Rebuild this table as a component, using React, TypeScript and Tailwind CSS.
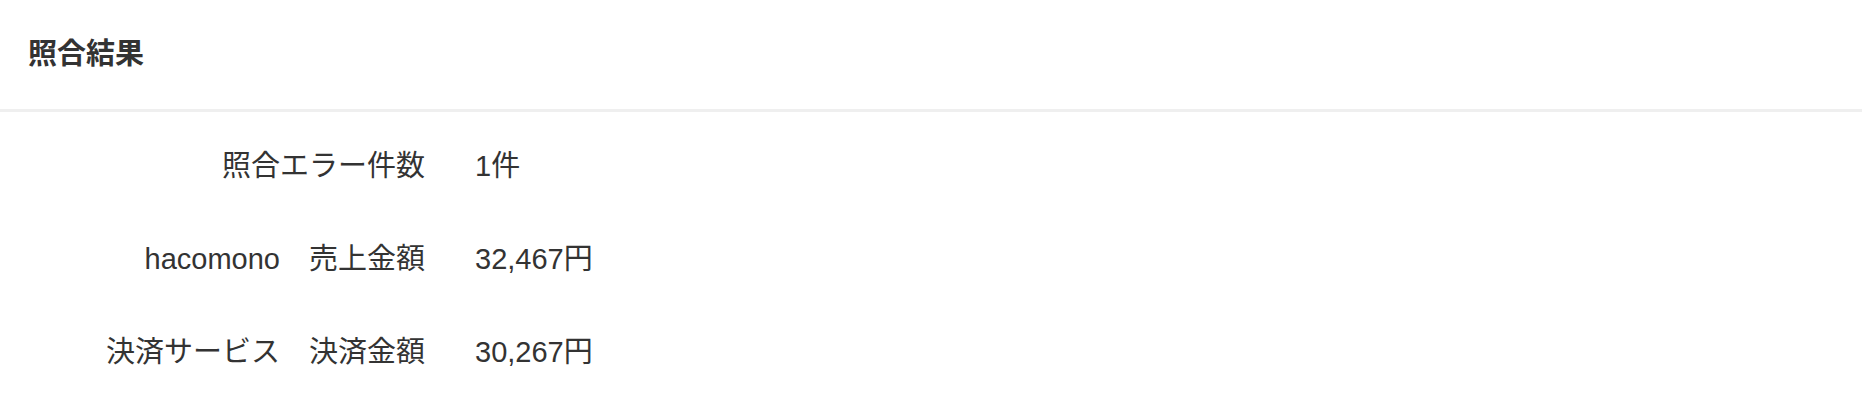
import React from "react";

const rows: { label: string; value: string }[] = [
  { label: "照合エラー件数", value: "1件" },
  { label: "hacomono　売上金額", value: "32,467円" },
  { label: "決済サービス　決済金額", value: "30,267円" },
];

export default function App() {
  return (
    <div
      className="w-[1862px] h-[406px] bg-white text-[#333333]"
      style={{ fontFamily: '"Liberation Sans", "Noto Sans CJK JP", sans-serif' }}
    >
      <div className="h-[112px] flex items-center pl-[28px] border-b-[3px] border-[#efefef]">
        <h2 className="text-[29px] font-bold leading-none">照合結果</h2>
      </div>
      <div className="pt-[8px] flex flex-col">
        {rows.map((r) => (
          <div key={r.label} className="h-[93px] flex items-center text-[29px] leading-none">
            <div className="w-[425px] text-right whitespace-nowrap">{r.label}</div>
            <div className="ml-[50px] whitespace-nowrap">{r.value}</div>
          </div>
        ))}
      </div>
    </div>
  );
}
